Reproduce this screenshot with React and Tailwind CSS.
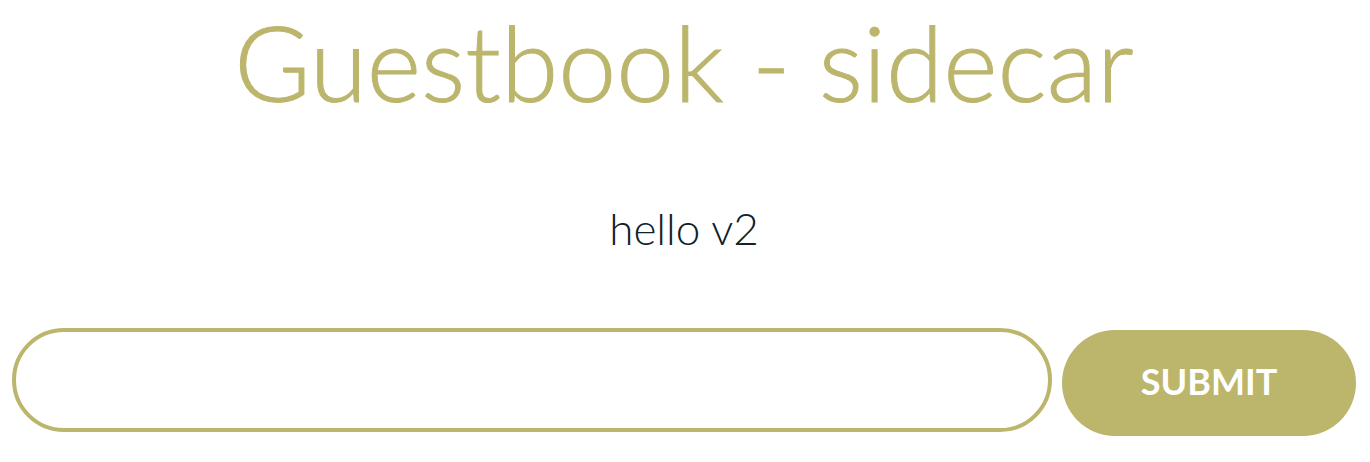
export default function App() {
  return (
    <main className="bg-white pr-3.5 pb-6 pl-3 font-['Lato',sans-serif] font-light">
      <h1 className="text-center text-[104px] leading-[124px] text-[#bcb56c] [-webkit-text-stroke:1px_#bcb56c]">Guestbook - sidecar</h1>
      <p className="mt-[78px] text-center text-[44px] leading-[52px] text-[#10212b]">hello v2</p>
      <form className="mt-[74px] flex items-start gap-2.5" onSubmit={(e) => e.preventDefault()}>
        <input
          type="text"
          aria-label="Guestbook entry"
          className="h-[104px] min-w-0 flex-1 rounded-full border-4 border-[#bcb56c] bg-white px-12 text-[40px] text-[#10212b] outline-none"
        />
        <button type="submit" className="mt-0.5 h-[106px] w-[294px] rounded-full bg-[#bcb56c] pb-1 text-4xl font-bold text-white">
          SUBMIT
        </button>
      </form>
    </main>
  );
}
